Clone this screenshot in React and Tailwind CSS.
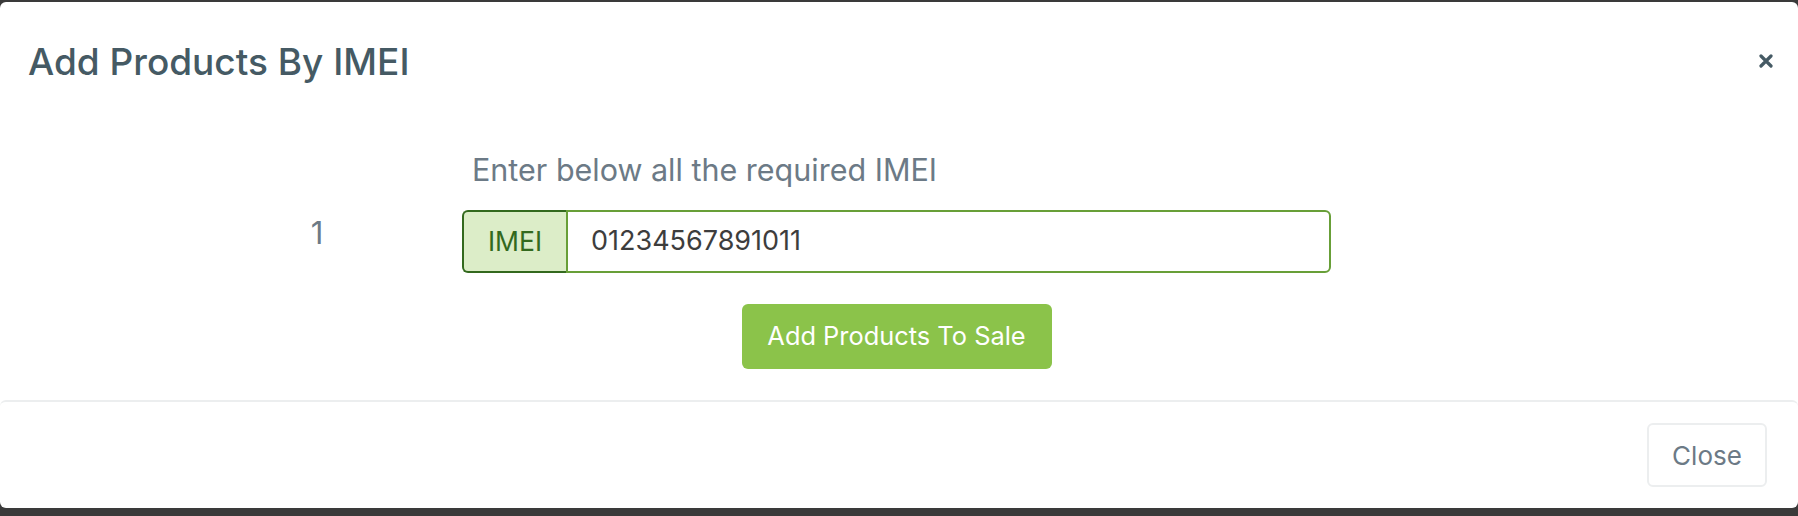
export default function App() {
  return (
    <div className="h-[516px] w-full bg-[#3a3a3a] pt-[2px] pb-[8px] font-['Inter',sans-serif]">
      <div className="flex h-full flex-col rounded-[6px] bg-white">
        {/* header */}
        <div className="flex h-[118px] shrink-0 items-center justify-between pl-[28px] pr-[24px]">
          <h4 className="text-[37px] font-medium leading-none text-[#455a64]">Add Products By IMEI</h4>
          <button className="flex h-[16px] w-[16px] items-center justify-center text-[#455a64]">
            <svg width="14" height="14" viewBox="0 0 14 14">
              <path d="M2 2 L12 12 M12 2 L2 12" stroke="currentColor" strokeWidth="3.2" strokeLinecap="round" />
            </svg>
          </button>
        </div>

        {/* body */}
        <div className="flex flex-1 pt-[30px] pl-[172px]">
          <div className="w-[290px] pt-[63px] text-center text-[31px] leading-[40px] text-[#6c7a86]">1</div>
          <div className="flex w-[869px] flex-col">
            <p className="pl-[10px] text-[30.5px] leading-[40px] text-[#6c7a86]">Enter below all the required IMEI</p>
            <div className="mt-[20px] flex h-[63px] rounded-[6px]">
              <span className="flex w-[104px] items-center justify-center rounded-l-[6px] border-2 border-r-0 border-[#33691e] bg-[#dcedc8] text-[26.5px] text-[#33691e]">
                IMEI
              </span>
              <input
                className="flex-1 rounded-r-[6px] border-2 border-[#689f38] px-[23px] text-[27px] text-[#3d3d3d] outline-none"
                defaultValue="01234567891011"
              />
            </div>
            <div className="mt-[31px] flex justify-center">
              <button className="h-[65px] w-[310px] rounded-[6px] bg-[#8bc34a] text-[25.4px] text-white">
                Add Products To Sale
              </button>
            </div>
          </div>
        </div>

        {/* footer */}
        <div className="flex h-[108px] shrink-0 items-center justify-end rounded-t-[6px] border-t-2 border-[#eceeef] pr-[31px]">
          <button className="h-[64px] w-[120px] rounded-[6px] border-2 border-[#eceeef] text-[26px] text-[#6c7a86]">
            Close
          </button>
        </div>
      </div>
    </div>
  );
}
